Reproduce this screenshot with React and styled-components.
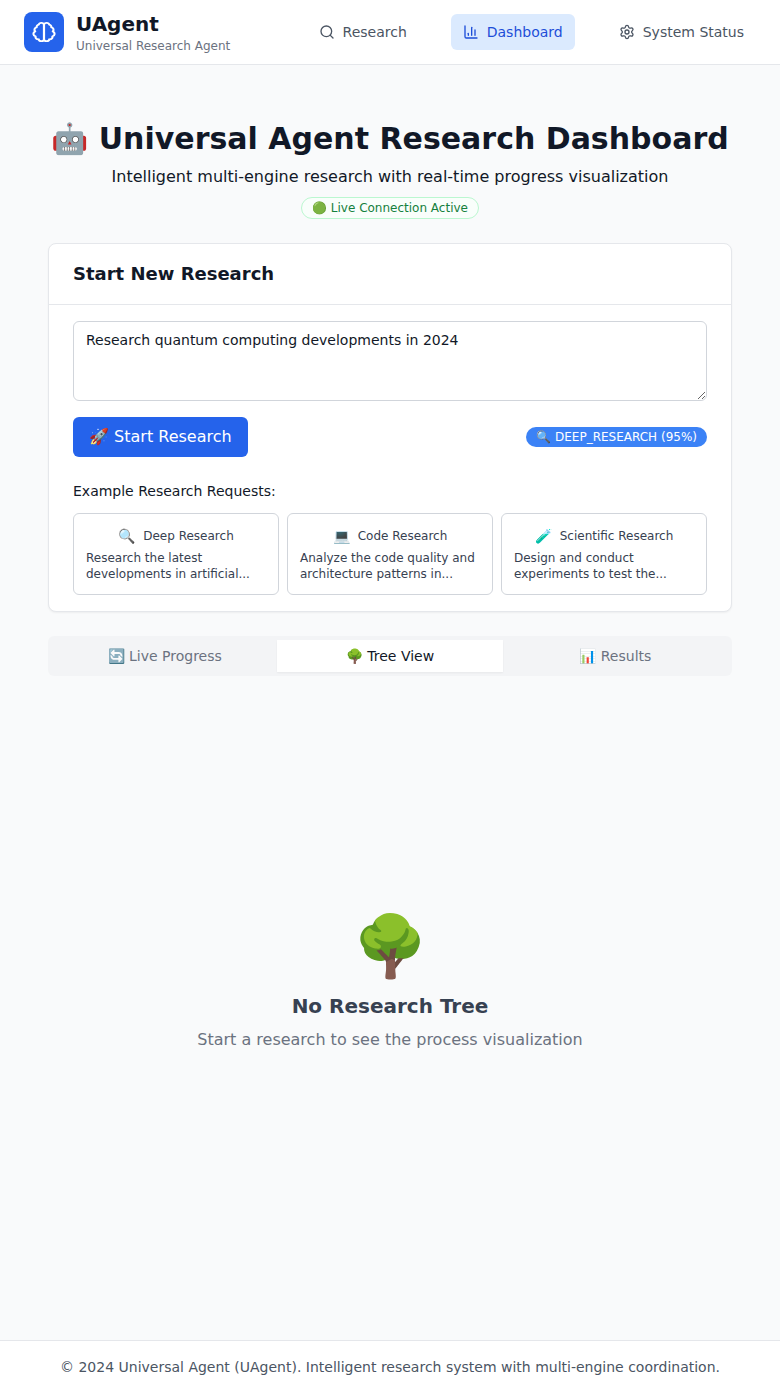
import React from 'react';
import styled, { createGlobalStyle } from 'styled-components';
import { Search, BarChart3, Settings } from 'lucide-react';

const GlobalStyle = createGlobalStyle`
  * { box-sizing: border-box; }
  html, body { margin: 0; padding: 0; }
  body {
    font-family: "DejaVu Sans", sans-serif;
    background: #f9fafb;
    color: #111827;
  }
`;

const Page = styled.div`
  min-height: 1393px;
  display: flex;
  flex-direction: column;
`;

const Header = styled.header`
  height: 65px;
  flex-shrink: 0;
  background: #fff;
  border-bottom: 1px solid #e5e7eb;
  padding: 0 24px;
  display: flex;
  align-items: center;
  justify-content: space-between;
`;

const Brand = styled.div`
  display: flex;
  align-items: center;
  gap: 12px;
`;

const LogoBox = styled.div`
  width: 40px;
  height: 40px;
  border-radius: 8px;
  background: #2563eb;
  color: #fff;
  display: flex;
  align-items: center;
  justify-content: center;
`;

const BrandName = styled.div`
  font-size: 20px;
  line-height: 28px;
  font-weight: 700;
`;

const BrandSub = styled.div`
  font-size: 12px;
  line-height: 16px;
  color: #6b7280;
`;

const Nav = styled.nav`
  display: flex;
  gap: 32px;
`;

const NavItem = styled.a`
  display: flex;
  align-items: center;
  gap: 8px;
  padding: 8px 12px;
  border-radius: 6px;
  font-size: 14px;
  line-height: 20px;
  color: ${props => (props.$active ? '#1d4ed8' : '#4b5563')};
  background: ${props => (props.$active ? '#dbeafe' : 'transparent')};
`;

const Main = styled.main`
  flex: 1;
  padding: 48px 48px 0;
  display: flex;
  flex-direction: column;
`;

const Hero = styled.div`
  text-align: center;
  margin-bottom: 24px;
`;

const Title = styled.h1`
  margin: 0;
  font-size: 30px;
  line-height: 52px;
  font-weight: 700;
  white-space: nowrap;
`;

const Subtitle = styled.p`
  margin: 0 0 8px;
  font-size: 16px;
  line-height: 24px;
  color: #111827;
`;

const LiveBadge = styled.span`
  display: inline-block;
  padding: 2px 10px;
  font-size: 12px;
  line-height: 16px;
  color: #15803d;
  background: #f9fefb;
  border: 1px solid #bbf7d0;
  border-radius: 9999px;
`;

const Card = styled.section`
  background: #fff;
  border: 1px solid #e5e7eb;
  border-radius: 8px;
  box-shadow: 0 1px 2px rgba(0, 0, 0, 0.05);
`;

const CardHeader = styled.div`
  padding: 16px 24px;
  border-bottom: 1px solid #e5e7eb;
  height: 61px;
`;

const CardTitle = styled.h2`
  margin: 0;
  font-size: 18px;
  line-height: 28px;
  font-weight: 700;
`;

const CardBody = styled.div`
  padding: 16px 24px;
`;

const Prompt = styled.textarea`
  display: block;
  width: 100%;
  height: 80px;
  padding: 8px 12px;
  font-family: inherit;
  font-size: 14px;
  line-height: 20px;
  color: #111827;
  background: #fff;
  border: 1px solid #d1d5db;
  border-radius: 6px;
  outline: none;
`;

const ActionRow = styled.div`
  margin-top: 16px;
  display: flex;
  align-items: center;
  justify-content: space-between;
`;

const StartButton = styled.button`
  height: 40px;
  padding: 0 16px 2px;
  font-family: inherit;
  font-size: 16px;
  color: #fff;
  background: #2563eb;
  border: 0;
  border-radius: 6px;
`;

const EngineBadge = styled.span`
  padding: 2px 10px;
  font-size: 12px;
  line-height: 16px;
  color: #fff;
  background: #3b82f6;
  border-radius: 9999px;
`;

const ExamplesLabel = styled.div`
  margin-top: 24px;
  font-size: 14px;
  line-height: 20px;
`;

const ExampleGrid = styled.div`
  margin-top: 12px;
  display: grid;
  grid-template-columns: repeat(3, 1fr);
  gap: 8px;
`;

const ExampleCard = styled.div`
  height: 82px;
  padding: 12px;
  background: #fff;
  border: 1px solid #d1d5db;
  border-radius: 6px;
`;

const ExampleTitle = styled.div`
  display: flex;
  justify-content: center;
  gap: 8px;
  font-size: 12px;
  line-height: 20px;
  color: #374151;
`;

const ExampleEmoji = styled.span`
  font-size: 14px;
`;

const ExampleText = styled.div`
  margin-top: 4px;
  font-size: 12px;
  line-height: 16px;
  color: #374151;
`;

const Tabs = styled.div`
  margin-top: 24px;
  height: 40px;
  padding: 4px;
  background: #f3f4f6;
  border-radius: 6px;
  display: grid;
  grid-template-columns: repeat(3, 1fr);
`;

const Tab = styled.div`
  display: flex;
  align-items: center;
  justify-content: center;
  font-size: 14px;
  color: ${props => (props.$active ? '#111827' : '#6b7280')};
  background: ${props => (props.$active ? '#fff' : 'transparent')};
  box-shadow: ${props => (props.$active ? '0 1px 2px rgba(0, 0, 0, 0.05)' : 'none')};
`;

const Empty = styled.div`
  flex: 1;
  display: flex;
  flex-direction: column;
  align-items: center;
  padding-top: 234px;
  text-align: center;
`;

const EmptyEmoji = styled.div`
  font-size: 60px;
  line-height: 72px;
`;

const EmptyTitle = styled.h3`
  margin: 10px 0 0;
  font-size: 20px;
  line-height: 28px;
  font-weight: 700;
  color: #374151;
`;

const EmptyText = styled.p`
  margin: 8px 0 0;
  font-size: 16px;
  line-height: 24px;
  color: #6b7280;
`;

const Footer = styled.footer`
  height: 53px;
  flex-shrink: 0;
  background: #fff;
  border-top: 1px solid #e5e7eb;
  display: flex;
  align-items: center;
  justify-content: center;
  font-size: 14px;
  color: #4b5563;
`;

// rounder brain than the one lucide ships now: two lobes and a centre line
function BrainIcon() {
  return (
    <svg width="24" height="24" viewBox="0 0 24 24" fill="none" stroke="currentColor" strokeWidth="2" strokeLinecap="round" strokeLinejoin="round">
      <g transform="translate(12 12) scale(1.06 0.92) translate(-12 -12)">
        <path d="M9.5 2A2.5 2.5 0 0 1 12 4.5v15a2.5 2.5 0 0 1-4.96.44 2.5 2.5 0 0 1-2.96-3.08 3 3 0 0 1-.34-5.58 2.5 2.5 0 0 1 1.32-4.24 2.5 2.5 0 0 1 1.98-3A2.5 2.5 0 0 1 9.5 2Z" />
        <path d="M14.5 2A2.5 2.5 0 0 0 12 4.5v15a2.5 2.5 0 0 0 4.96.44 2.5 2.5 0 0 0 2.96-3.08 3 3 0 0 0 .34-5.58 2.5 2.5 0 0 0-1.32-4.24 2.5 2.5 0 0 0-1.98-3A2.5 2.5 0 0 0 14.5 2Z" />
      </g>
    </svg>
  );
}

const examples = [
  { emoji: '🔍', title: 'Deep Research', text: 'Research the latest developments in artificial...' },
  { emoji: '💻', title: 'Code Research', text: 'Analyze the code quality and architecture patterns in...' },
  { emoji: '🧪', title: 'Scientific Research', text: 'Design and conduct experiments to test the...' },
];

export default function App() {
  return (
    <Page>
      <GlobalStyle />
      <Header>
        <Brand>
          <LogoBox><BrainIcon /></LogoBox>
          <div>
            <BrandName>UAgent</BrandName>
            <BrandSub>Universal Research Agent</BrandSub>
          </div>
        </Brand>
        <Nav>
          <NavItem><Search size={16} />Research</NavItem>
          <NavItem $active><BarChart3 size={16} />Dashboard</NavItem>
          <NavItem><Settings size={16} />System Status</NavItem>
        </Nav>
      </Header>

      <Main>
        <Hero>
          <Title>🤖 Universal Agent Research Dashboard</Title>
          <Subtitle>Intelligent multi-engine research with real-time progress visualization</Subtitle>
          <LiveBadge>🟢 Live Connection Active</LiveBadge>
        </Hero>

        <Card>
          <CardHeader>
            <CardTitle>Start New Research</CardTitle>
          </CardHeader>
          <CardBody>
            <Prompt readOnly value="Research quantum computing developments in 2024" />
            <ActionRow>
              <StartButton>🚀 Start Research</StartButton>
              <EngineBadge>🔍 DEEP_RESEARCH (95%)</EngineBadge>
            </ActionRow>
            <ExamplesLabel>Example Research Requests:</ExamplesLabel>
            <ExampleGrid>
              {examples.map(example => (
                <ExampleCard key={example.title}>
                  <ExampleTitle>
                    <ExampleEmoji>{example.emoji}</ExampleEmoji>
                    {example.title}
                  </ExampleTitle>
                  <ExampleText>{example.text}</ExampleText>
                </ExampleCard>
              ))}
            </ExampleGrid>
          </CardBody>
        </Card>

        <Tabs>
          <Tab>🔄 Live Progress</Tab>
          <Tab $active>🌳 Tree View</Tab>
          <Tab>📊 Results</Tab>
        </Tabs>

        <Empty>
          <EmptyEmoji>🌳</EmptyEmoji>
          <EmptyTitle>No Research Tree</EmptyTitle>
          <EmptyText>Start a research to see the process visualization</EmptyText>
        </Empty>
      </Main>

      <Footer>© 2024 Universal Agent (UAgent). Intelligent research system with multi-engine coordination.</Footer>
    </Page>
  );
}
